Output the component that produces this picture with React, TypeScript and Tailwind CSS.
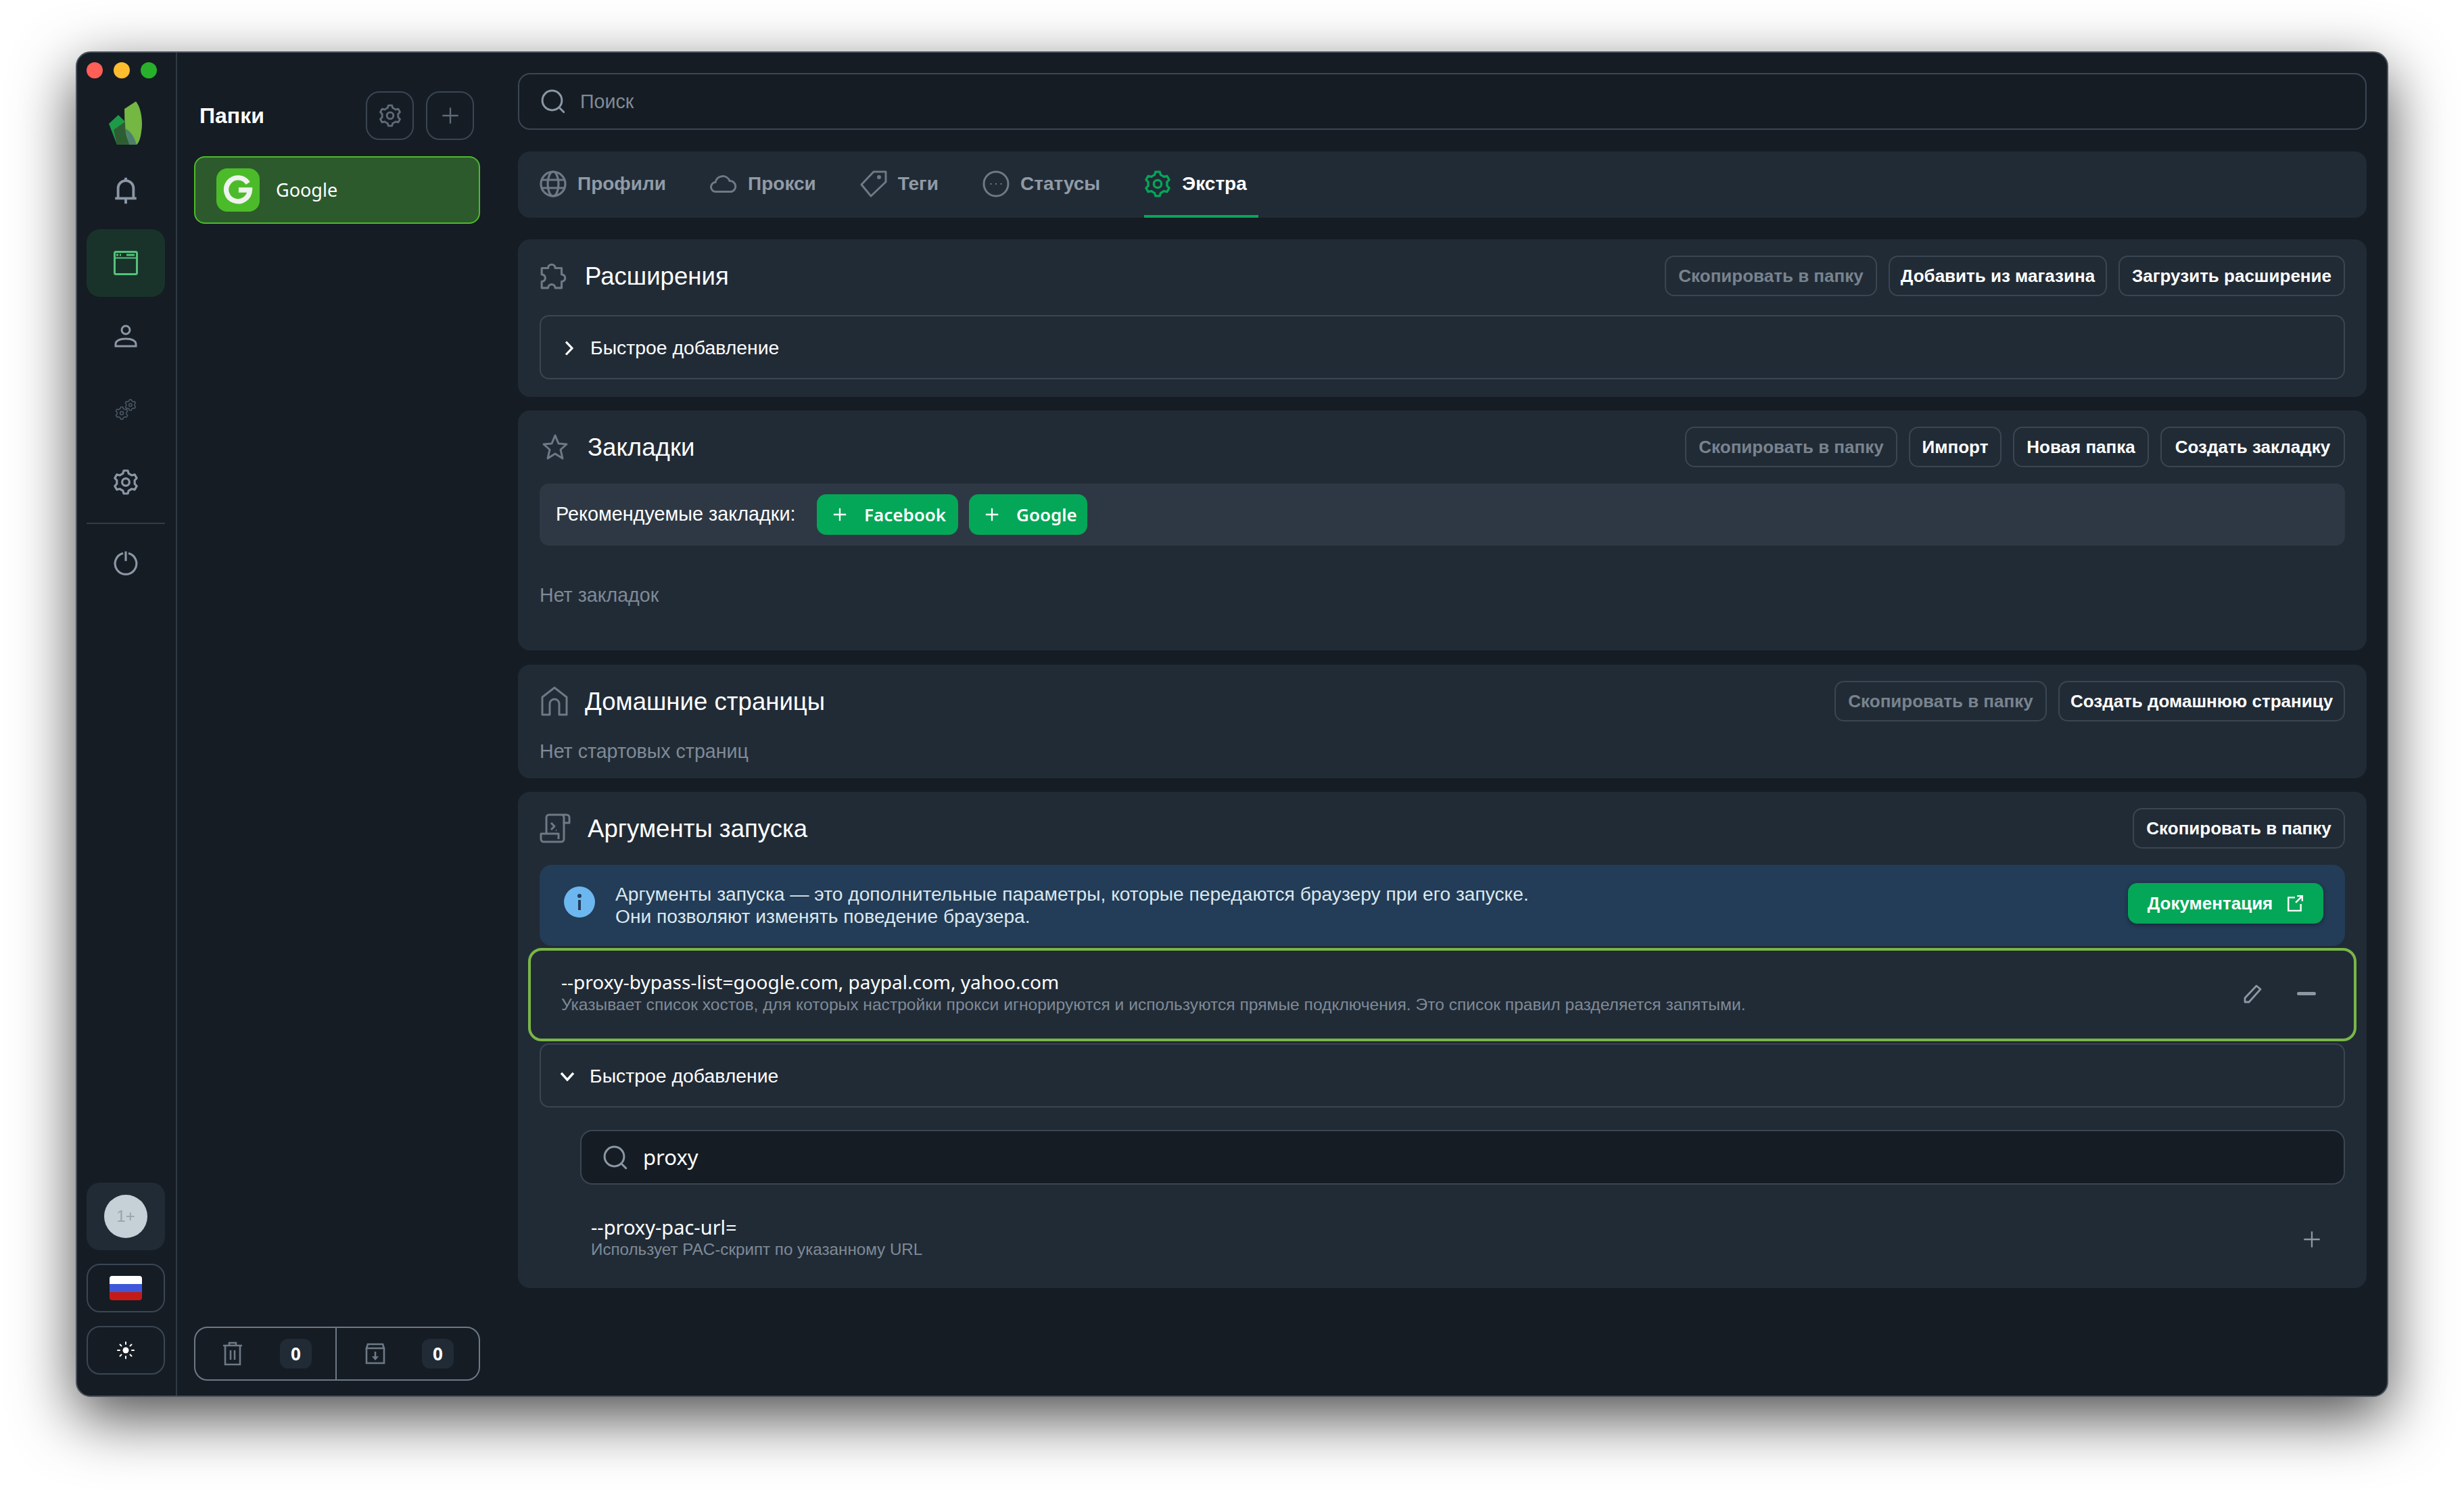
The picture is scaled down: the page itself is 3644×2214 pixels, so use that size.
const sectionTitle = "mt-[2px] text-[36.6px] leading-[44px] text-white";
const lat = "font-['Noto_Sans',sans-serif]";
const muted = "text-[28.6px] leading-[34px] text-[#7f8a96]";

// six flat teeth, concentric arcs between them
function gearPath() {
  const pt = (deg: number, r: number) => {
    const a = (deg * Math.PI) / 180;
    return `${(12 + r * Math.cos(a)).toFixed(2)} ${(12 + r * Math.sin(a)).toFixed(2)}`;
  };
  let d = "";
  for (let i = 0; i < 6; i++) {
    const a = -90 + 60 * i;
    d += `${i === 0 ? "M" : "A8.4 8.4 0 0 1 "}${pt(a - 19, 8.4)}L${pt(a - 10, 10.9)}L${pt(a + 10, 10.9)}L${pt(a + 19, 8.4)}`;
  }
  return `${d}A8.4 8.4 0 0 1 ${pt(-109, 8.4)}Z`;
}
const GEAR_D = gearPath();

function Gear({ className, sw = 2 }: { className?: string; sw?: number }) {
  return (
    <svg viewBox="0 0 24 24" fill="none" stroke="currentColor" strokeWidth={sw} strokeLinejoin="round" className={className}>
      <circle cx="12" cy="12" r="3.4" />
      <path d={GEAR_D} />
    </svg>
  );
}

function Search({ className }: { className?: string }) {
  return (
    <svg viewBox="0 0 24 24" fill="none" stroke="currentColor" strokeWidth="2" strokeLinecap="round" className={className}>
      <circle cx="11" cy="11" r="9.600" />
      <path d="M18.500 18.500l4 4" />
    </svg>
  );
}

function Plus({ className, sw = 2 }: { className?: string; sw?: number }) {
  return (
    <svg viewBox="0 0 24 24" fill="none" stroke="currentColor" strokeWidth={sw} className={className}>
      <path d="M12 2v20M2 12h20" />
    </svg>
  );
}

function OutlineBtn({ label, w, dim }: { label: string; w: string; dim?: boolean }) {
  return (
    <button className={`h-[60px] ${w} rounded-[14px] border-2 border-[#3b4653] text-[26px] font-bold whitespace-nowrap ${dim ? "text-[#78838e]" : "text-white"}`}>
      {label}
    </button>
  );
}

function QuickAdd({ open }: { open?: boolean }) {
  return (
    <div className="flex h-[95px] items-center rounded-[14px] border-2 border-[#3b4653] pl-[28px]">
      {open ? (
        <svg viewBox="0 0 22 14" fill="none" stroke="white" strokeWidth="3.4" className="mt-[2px] h-[14px] w-[22px]"><path d="M2 2l9 10 9-10" /></svg>
      ) : (
        <svg viewBox="0 0 15 22" fill="none" stroke="white" strokeWidth="3.2" className="ml-[6px] mt-[2px] h-[22px] w-[15px]"><path d="M3 1.500l9 9.500-9 9.500" /></svg>
      )}
      <span className={`mt-[2px] text-[28.4px] text-white ${open ? "ml-[22px]" : "ml-[24px]"}`}>Быстрое добавление</span>
    </div>
  );
}

function Tab({ icon, label, active }: { icon: React.ReactNode; label: string; active?: boolean }) {
  return (
    <div className={`flex h-full items-center gap-[16px] border-b-4 pr-[17px] pt-[2px] ${active ? "border-[#04a757]" : "border-transparent"}`}>
      {icon}
      <span className={`text-[28px] font-bold ${active ? "text-white" : "text-[#909ba6]"}`}>{label}</span>
    </div>
  );
}

function RailIcon({ children }: { children: React.ReactNode }) {
  return <div className="flex h-[100px] w-[116px] items-center justify-center">{children}</div>;
}

function GreenBtn({ label, w }: { label: string; w: string }) {
  return (
    <button className={`flex h-[60px] ${w} items-center gap-[25px] rounded-[14px] bg-[#04a757] pl-[23px] text-[26px] font-semibold text-white ${lat}`}>
      <Plus className="h-[22px] w-[22px] shrink-0" sw={2.500} />
      {label}
    </button>
  );
}

export default function App() {
  return (
    <div className="h-[2214px] w-[3644px] overflow-hidden bg-white pl-[112px] pt-[76px] font-['Liberation_Sans',sans-serif]">
      <div className="flex h-[1990px] w-[3420px] overflow-hidden rounded-[22px] border-2 border-[#4a525c] bg-[#151c24] shadow-[0_30px_90px_rgba(0,0,0,0.7)]">
        {/* left rail */}
        <aside className="flex w-[148px] shrink-0 flex-col items-center border-r-2 border-[#2f3944] pb-[31px] pr-[2px] pt-[14px]">
          <div className="flex w-full gap-[16px] pl-[14px]">
            <span className="h-[24px] w-[24px] rounded-full bg-[#ff5f57]" />
            <span className="h-[24px] w-[24px] rounded-full bg-[#febc2e]" />
            <span className="h-[24px] w-[24px] rounded-full bg-[#28b02c]" />
          </div>
          <svg viewBox="0 0 50 64" className="mt-[34px] h-[64px] w-[50px]">
            <path d="M23 11L40 0C47 8 51 28 48 45C47 54 44 62 41 64H24z" fill="#74b743" />
            <path d="M14 20L0 33L12 64H28C24 50 23 35 24 30z" fill="#1d9a48" />
            <path d="M12 64L7 42L24 30C24 42 26 56 32 64z" fill="#2f5d33" />
            <path d="M24 40C33 44 38 54 41 64H30z" fill="#4c7f6c" />
          </svg>
          <div className="mt-[17px]">
            <RailIcon>
              <svg viewBox="0 0 24 24" fill="none" stroke="#8c97a5" strokeWidth="2.200" strokeLinejoin="round" className="mt-[2px] h-[42px] w-[42px]">
                <path d="M3 18.500h18M5.500 18.500V10a6.500 6.500 0 0113 0v8.500M12 1v2.500M12 18.500V23" />
              </svg>
            </RailIcon>
          </div>
          <div className="mt-[8px] flex h-[100px] w-[116px] items-center justify-center rounded-[20px] bg-[#19332b]">
            <svg viewBox="0 0 36 36" fill="none" stroke="#55c27a" strokeWidth="3" className="h-[36px] w-[36px]">
              <rect x="1.500" y="1.500" width="33" height="33" rx="2" />
              <path d="M1.500 10.500h33" strokeWidth="2" />
              <path d="M4 6h3M9 6h2M19 6h12" strokeWidth="3" />
            </svg>
          </div>
          <div className="mt-[8px]">
            <RailIcon>
              <svg viewBox="0 0 36 36" fill="none" stroke="#8c97a5" strokeWidth="3" className="h-[36px] w-[36px]">
                <circle cx="18" cy="9" r="6" />
                <path d="M3 33v-3c0-5 6-8 15-8s15 3 15 8v3z" />
              </svg>
            </RailIcon>
          </div>
          <div className="mt-[8px]">
            <RailIcon>
              <svg viewBox="0 0 32 32" fill="none" stroke="#4c5865" strokeLinejoin="round" className="mt-[2px] h-[32px] w-[32px]">
                <g transform="translate(0 11) scale(.84)" strokeWidth="1.800">
                  <circle cx="12" cy="12" r="3" /><path d={GEAR_D} />
                </g>
                <g transform="translate(14 0) scale(.74)" strokeWidth="2">
                  <circle cx="12" cy="12" r="3" /><path d={GEAR_D} />
                </g>
              </svg>
            </RailIcon>
          </div>
          <div className="mt-[8px]">
            <RailIcon><Gear className="h-[38px] w-[38px] text-[#8c97a5]" /></RailIcon>
          </div>
          <div className="mt-[10px] h-[2px] w-[116px] bg-[#323c47]" />
          <div className="mt-[7px]">
            <RailIcon>
              <svg viewBox="0 0 24 24" fill="none" stroke="#8c97a5" strokeWidth="2" className="h-[38px] w-[38px]">
                <path d="M12 1.500v9M9.500 3.300a10 10 0 105 0" />
              </svg>
            </RailIcon>
          </div>
          <div className="mt-auto flex h-[100px] w-[116px] items-center justify-center rounded-[20px] bg-[#212b36]">
            <div className="flex h-[64px] w-[64px] items-center justify-center rounded-full bg-[#c5d1d6] text-[24px] text-[#98a5ad]">1+</div>
          </div>
          <div className="mt-[20px] flex h-[72px] w-[116px] items-center justify-center rounded-[20px] border-2 border-[#3b4653]">
            <div className="flex h-[36px] w-[48px] flex-col overflow-hidden rounded-[4px]">
              <span className="flex-1 bg-white" />
              <span className="flex-1 bg-[#3f57d9]" />
              <span className="flex-1 bg-[#c41b17]" />
            </div>
          </div>
          <div className="mt-[20px] flex h-[72px] w-[116px] items-center justify-center rounded-[20px] border-2 border-[#3b4653]">
            <svg viewBox="0 0 26 26" fill="none" stroke="white" strokeWidth="2" strokeLinecap="round" className="h-[26px] w-[26px]">
              <circle cx="13" cy="13" r="4.500" fill="white" stroke="none" />
              <path d="M13 1v3M13 22v3M1 13h3M22 13h3M4.500 4.500l2 2M19.500 19.500l2 2M4.500 21.500l2-2M19.500 6.500l2-2" />
            </svg>
          </div>
        </aside>

        {/* folders */}
        <aside className="flex w-[504px] shrink-0 flex-col pb-[22px] pl-[25px] pr-[56px] pt-[57px]">
          <div className="flex h-[72px] items-center">
            <h2 className="ml-[8px] text-[32px] font-bold text-white">Папки</h2>
            <button className="ml-auto flex h-[72px] w-[71px] items-center justify-center rounded-[20px] border-2 border-[#3b4653]">
              <Gear className="h-[34px] w-[34px] text-[#5f6b78]" />
            </button>
            <button className="ml-[18px] mr-[9px] flex h-[72px] w-[71px] items-center justify-center rounded-[20px] border-2 border-[#3b4653]">
              <Plus className="h-[28px] w-[28px] text-[#5f6b78]" sw={2} />
            </button>
          </div>
          <div className="mt-[24px] flex h-[100px] items-center rounded-[16px] border-2 border-[#4cbb2a] bg-[#2d5a2d] pl-[31px]">
            <div className="flex h-[64px] w-[64px] items-center justify-center rounded-[16px] bg-[#4cbb2a]">
              <svg viewBox="0 0 24 24" fill="none" stroke="#eef3ef" strokeWidth="4" className="h-[44px] w-[44px]">
                <path d="M20 6.500A9.500 9.500 0 1021.500 12H12.500" />
              </svg>
            </div>
            <span className={`ml-[24px] text-[27px] text-white ${lat}`}>Google</span>
          </div>
          <div className="mt-auto flex h-[80px] rounded-[20px] border-2 border-[#6e7986]">
            <div className="flex w-[209px] items-center border-r-2 border-[#6e7986] pl-[40px]">
              <svg viewBox="0 0 30 36" fill="none" stroke="#6e7986" strokeWidth="2.600" className="h-[36px] w-[30px]">
                <path d="M1 6h28M4 6v28h22V6M10 6V2h10v4M12 13v14M18 13v14" />
              </svg>
              <span className={`ml-[55px] flex h-[44px] w-[47px] items-center justify-center rounded-[12px] bg-[#212b36] text-[26px] font-bold text-white ${lat}`}>0</span>
            </div>
            <div className="flex flex-1 items-center pl-[42px]">
              <svg viewBox="0 0 30 32" fill="none" stroke="#6e7986" strokeWidth="2.600" className="h-[32px] w-[30px]">
                <path d="M2 8l2-6h22l2 6zM2 8v22h26V8" />
                <path d="M15 13v10" /><path d="M10 20h10l-5 6z" fill="#6e7986" stroke="none" />
              </svg>
              <span className={`ml-[54px] flex h-[44px] w-[47px] items-center justify-center rounded-[12px] bg-[#212b36] text-[26px] font-bold text-white ${lat}`}>0</span>
            </div>
          </div>
        </aside>

        {/* main */}
        <main className="flex w-[2734px] shrink-0 flex-col pt-[30px]">
          <div className="flex h-[84px] items-center rounded-[18px] border-2 border-[#3b4653] pl-[32px]">
            <Search className="h-[36px] w-[36px] text-[#8c97a5]" />
            <span className="ml-[22px] text-[28.6px] text-[#7f8a96]">Поиск</span>
          </div>

          <div className="mt-[32px] flex h-[98px] items-stretch gap-[48px] rounded-[18px] bg-[#212b36] pl-[32px]">
            <Tab label="Профили" icon={
              <svg viewBox="0 0 40 40" fill="none" stroke="#6e7986" strokeWidth="3.200" className="h-[40px] w-[40px]">
                <circle cx="20" cy="20" r="18" /><ellipse cx="20" cy="20" rx="8" ry="18" /><path d="M3 14h34M3 26h34" />
              </svg>} />
            <Tab label="Прокси" icon={
              <svg viewBox="0 0 40 26" fill="none" stroke="#6e7986" strokeWidth="3" className="h-[26px] w-[40px]">
                <path d="M9 24.500a7 7 0 01-1-14 11 11 0 0121-2 8.200 8.200 0 013 16z" />
              </svg>} />
            <Tab label="Теги" icon={
              <svg viewBox="0 0 40 40" fill="none" stroke="#6e7986" strokeWidth="3" strokeLinejoin="round" className="h-[40px] w-[40px]">
                <path d="M20 2h18v15L16 38 2 21z" /><circle cx="28" cy="10" r="1.500" fill="#6e7986" />
              </svg>} />
            <Tab label="Статусы" icon={
              <svg viewBox="0 0 40 40" fill="none" stroke="#6e7986" strokeWidth="3" className="h-[40px] w-[40px]">
                <circle cx="20" cy="20" r="18" /><path d="M11.500 20h2M19 20h2M26.500 20h2" strokeWidth="2" />
              </svg>} />
            <Tab active label="Экстра" icon={<Gear className="h-[40px] w-[40px] text-[#04a757]" />} />
          </div>

          <section className="mt-[32px] flex h-[233px] flex-col rounded-[18px] bg-[#212b36] px-[32px] pt-[24px]">
            <header className="flex h-[60px] items-center">
              <svg viewBox="0 0 40 40" fill="none" stroke="#6e7986" strokeWidth="3" strokeLinejoin="round" className="h-[42px] w-[42px]">
                <path d="M3 9h9a5 5 0 1110 0h9v9a5 5 0 110 10v9H22a5 5 0 10-10 0H3v-9a5 5 0 100-10z" />
              </svg>
              <h3 className={`ml-[25px] ${sectionTitle}`}>Расширения</h3>
              <div className="ml-auto flex gap-[17px]">
                <OutlineBtn dim w="w-[314px]" label="Скопировать в папку" />
                <OutlineBtn w="w-[323px]" label="Добавить из магазина" />
                <OutlineBtn w="w-[335px]" label="Загрузить расширение" />
              </div>
            </header>
            <div className="mt-[28px]"><QuickAdd /></div>
          </section>

          <section className="mt-[20px] flex h-[355px] flex-col rounded-[18px] bg-[#212b36] px-[32px] pt-[24px]">
            <header className="flex h-[60px] items-center">
              <svg viewBox="0 0 40 40" fill="none" stroke="#6e7986" strokeWidth="3" strokeLinejoin="round" className="ml-[3px] h-[40px] w-[40px]">
                <path d="M20 3l5 12 12 1-9 8 3 13-11-7-11 7 3-13-9-8 12-1z" />
              </svg>
              <h3 className={`ml-[28px] ${sectionTitle}`}>Закладки</h3>
              <div className="ml-auto flex gap-[17px]">
                <OutlineBtn dim w="w-[314px]" label="Скопировать в папку" />
                <OutlineBtn w="w-[137px]" label="Импорт" />
                <OutlineBtn w="w-[201px]" label="Новая папка" />
                <OutlineBtn w="w-[273px]" label="Создать закладку" />
              </div>
            </header>
            <div className="mt-[24px] flex h-[92px] items-center rounded-[14px] bg-[#2e3844] pl-[24px]">
              <span className="w-[354px] shrink-0 text-[28.8px] whitespace-nowrap text-white">Рекомендуемые закладки:</span>
              <div className="ml-[32px] flex gap-[16px]">
                <GreenBtn label="Facebook" w="w-[209px]" />
                <GreenBtn label="Google" w="w-[175px]" />
              </div>
            </div>
            <p className={`mt-[56px] ${muted}`}>Нет закладок</p>
          </section>

          <section className="mt-[21px] flex h-[168px] flex-col rounded-[18px] bg-[#212b36] px-[32px] pt-[24px]">
            <header className="flex h-[60px] items-center">
              <svg viewBox="0 0 40 44" fill="none" stroke="#6e7986" strokeWidth="3" strokeLinejoin="round" className="ml-[2px] h-[44px] w-[40px]">
                <path d="M2 42V16L20 2l18 14v26H27V26a7 7 0 00-14 0v16z" />
              </svg>
              <h3 className={`ml-[25px] ${sectionTitle}`}>Домашние страницы</h3>
              <div className="ml-auto flex gap-[17px]">
                <OutlineBtn dim w="w-[314px]" label="Скопировать в папку" />
                <OutlineBtn w="w-[424px]" label="Создать домашнюю страницу" />
              </div>
            </header>
            <p className={`mt-[27px] ${muted}`}>Нет стартовых страниц</p>
          </section>

          <section className="mt-[20px] flex h-[734px] flex-col rounded-[18px] bg-[#212b36] px-[32px] pt-[24px]">
            <header className="flex h-[60px] items-center">
              <svg viewBox="0 0 46 44" fill="none" stroke="#6e7986" strokeWidth="3" strokeLinejoin="round" className="h-[44px] w-[46px]">
                <path d="M10 30V6a4 4 0 014-4h26a4 4 0 014 4v8h-8V6a4 4 0 00-4-4" />
                <path d="M36 12v26a4 4 0 01-4 4H6a4 4 0 01-4-4v-8h26v8" />
                <path d="M17 14l5 5-5 5M24 25h1" />
              </svg>
              <h3 className={`ml-[25px] ${sectionTitle}`}>Аргументы запуска</h3>
              <div className="ml-auto"><OutlineBtn w="w-[314px]" label="Скопировать в папку" /></div>
            </header>
            <div className="mt-[24px] flex h-[120px] items-center rounded-[18px] bg-[#233c57] pl-[36px] pr-[32px]">
              <svg viewBox="0 0 46 46" className="-mt-[10px] h-[46px] w-[46px] shrink-0">
                <circle cx="23" cy="23" r="23" fill="#6cb7ef" />
                <circle cx="23" cy="14" r="3" fill="#233c57" />
                <rect x="21" y="20" width="4" height="15" fill="#233c57" />
              </svg>
              <p className="ml-[30px] text-[28.2px] leading-[33px] text-[#dbe8ee]">
                Аргументы запуска — это дополнительные параметры, которые передаются браузеру при его запуске.<br />
                Они позволяют изменять поведение браузера.
              </p>
              <button className="ml-auto -mt-[6px] flex h-[60px] w-[289px] items-center justify-center gap-[20px] rounded-[14px] bg-[#04a757] text-[26px] font-bold text-white shadow-[0_2px_6px_rgba(0,0,0,0.35)]">
                Документация
                <svg viewBox="0 0 24 24" fill="none" stroke="white" strokeWidth="2.200" className="h-[26px] w-[26px]">
                  <path d="M12 4H3v18h17v-9M13 11l9-9M15 2h7v7" />
                </svg>
              </button>
            </div>
            <div className="-mx-[17px] mt-[3px] flex h-[138px] items-center rounded-[20px] border-[4px] border-[#7ab648] pb-[6px] pl-[45px] pr-[56px]">
              <div className="flex-1">
                <div className={`text-[28px] leading-[34px] text-white ${lat}`}>--proxy-bypass-list=google.com, paypal.com, yahoo.com</div>
                <div className="mt-[2px] text-[24.6px] leading-[30px] text-[#7f8a96]">Указывает список хостов, для которых настройки прокси игнорируются и используются прямые подключения. Это список правил разделяется запятыми.</div>
              </div>
              <svg viewBox="0 0 28 28" fill="none" stroke="#8c97a5" strokeWidth="2.800" strokeLinejoin="round" className="mt-[3px] h-[28px] w-[28px]">
                <path d="M2 26v-6L19 2l6 5L8 26z" />
              </svg>
              <span className="ml-[51px] mt-[3px] h-[5px] w-[28px] rounded-full bg-[#8c97a5]" />
            </div>
            <div className="mt-[3px]"><QuickAdd open /></div>
            <div className="ml-[60px] mt-[33px] flex h-[81px] items-center rounded-[18px] border-2 border-[#3b4653] bg-[#151c24] pl-[32px]">
              <Search className="h-[36px] w-[36px] text-[#8c97a5]" />
              <span className={`ml-[23px] text-[31px] text-white ${lat}`}>proxy</span>
            </div>
            <div className="ml-[76px] mr-[35px] mt-[46px] flex items-center">
              <div className="flex-1">
                <div className={`text-[29px] leading-[34px] text-white ${lat}`}>--proxy-pac-url=</div>
                <div className="mt-[1px] text-[24.2px] leading-[30px] text-[#7f8a96]">Использует PAC-скрипт по указанному URL</div>
              </div>
              <Plus className="mt-[4px] h-[28px] w-[28px] text-[#8c97a5]" sw={2} />
            </div>
          </section>
        </main>
      </div>
    </div>
  );
}
